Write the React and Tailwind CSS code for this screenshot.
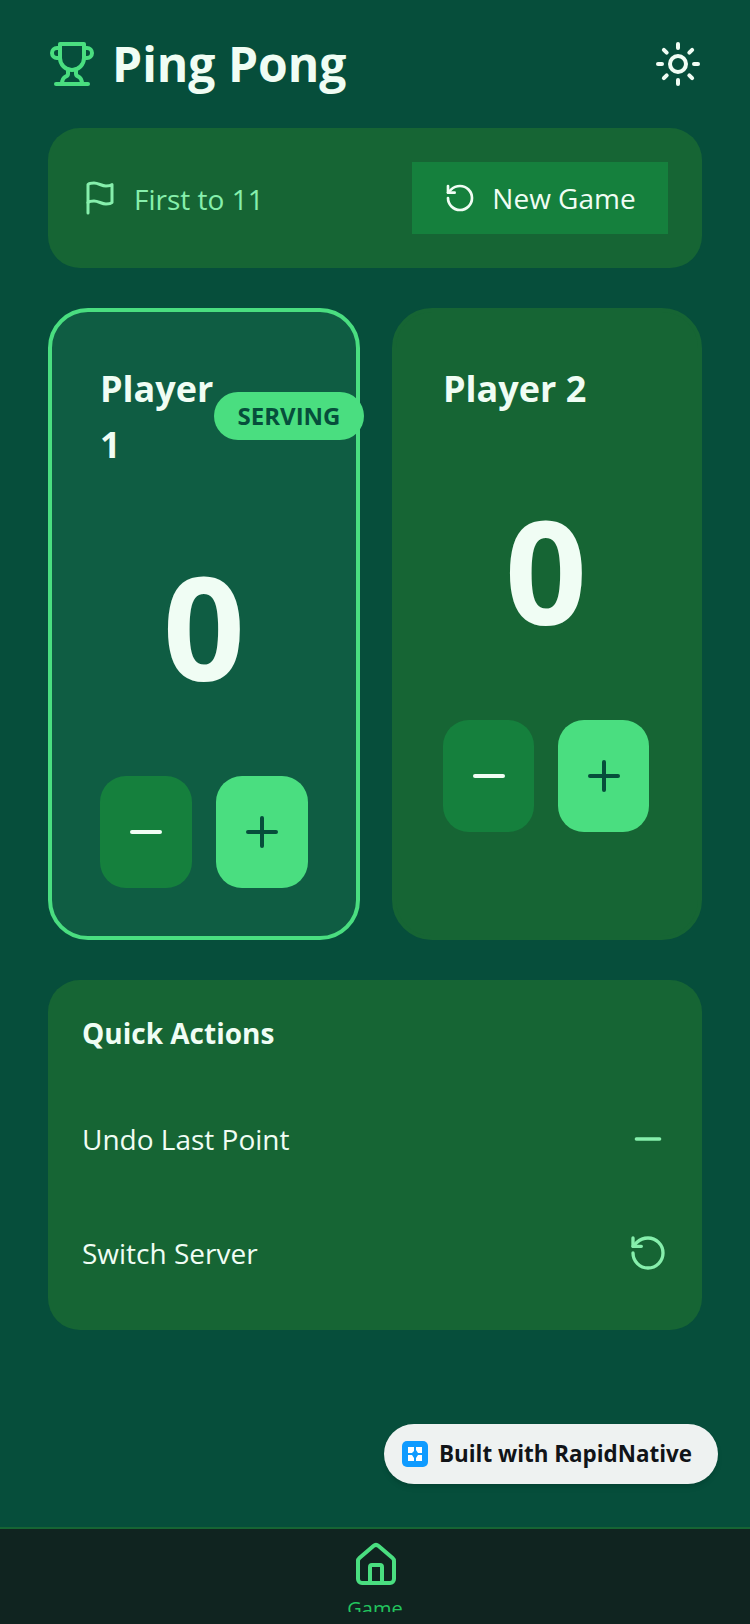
import React from 'react'
import { Sun, RotateCcw, Minus, Plus, House } from 'lucide-react'

const TrophyIcon = () => (
  <svg width="48" height="48" viewBox="0 0 24 24" fill="none" stroke="#4ade80" strokeWidth="2" strokeLinecap="round" strokeLinejoin="round">
    <path d="M6 9H4.5a2.5 2.5 0 0 1 0-5H6" />
    <path d="M18 9h1.5a2.5 2.5 0 0 0 0-5H18" />
    <path d="M4 22h16" />
    <path d="M10 14.66V17c0 .55-.47.98-.97 1.21C7.85 18.75 7 20.24 7 22" />
    <path d="M14 14.66V17c0 .55.47.98.97 1.21C16.15 18.75 17 20.24 17 22" />
    <path d="M18 2H6v7a6 6 0 0 0 12 0V2Z" />
  </svg>
)

const FlagIcon = () => (
  <svg width="36" height="36" viewBox="0 0 24 24" fill="none" stroke="#86efac" strokeWidth="2" strokeLinecap="round" strokeLinejoin="round">
    <path d="M4 15s1-1 4-1 5 2 8 2 4-1 4-1V3s-1 1-4 1-5-2-8-2-4 1-4 1z" />
    <path d="M4 22v-7" />
  </svg>
)

const PlayerCard = ({ name, serving }) => {
  return (
    <div className={serving
      ? 'relative w-[312px] shrink-0 rounded-[40px] p-[48px] bg-[#0f5d43] border-4 border-[#4ade80]'
      : 'relative flex-1 rounded-[40px] py-[48px] pl-[47px] pr-[49px] bg-[#166534] border-4 border-[#166534]'}>
      <div className={serving
        ? 'max-w-[120px] mt-[1px] text-[36px] leading-[56px] font-bold text-[#f0fdf4]'
        : 'mt-[1px] text-[36px] leading-[56px] font-bold text-[#f0fdf4]'}>{name}</div>
      {serving && (
        <div className="absolute top-[80px] right-[-8px] h-[48px] w-[150px] flex items-center justify-center rounded-full bg-[#4ade80] text-[24px] font-bold text-[#064e3b]">
          SERVING
        </div>
      )}
      <div className="mt-[80px] mb-[79px] text-center text-[144px] leading-[144px] font-bold text-[#f0fdf4]">0</div>
      <div className="flex gap-[24px]">
        <button className="flex-1 h-[112px] flex items-center justify-center rounded-[26px] bg-[#15803d] text-[#f0fdf4]">
          <Minus size={48} strokeWidth={2} />
        </button>
        <button className="flex-1 h-[112px] flex items-center justify-center rounded-[26px] bg-[#4ade80] text-[#064e3b]">
          <Plus size={48} strokeWidth={2} />
        </button>
      </div>
    </div>
  )
}

export default function App() {
  return (
    <div className="relative h-[1624px] w-[750px] overflow-hidden bg-[#064e3b] flex flex-col font-['Open_Sans',sans-serif]">
      <div className="flex-1 px-[48px] pt-[32px]">
        <div className="flex items-center justify-between h-[64px]">
          <div className="flex items-center gap-[16px]">
            <TrophyIcon />
            <span className="text-[48px] leading-[64px] font-bold text-[#f0fdf4]">Ping Pong</span>
          </div>
          <Sun size={48} strokeWidth={2} className="text-[#f0fdf4]" />
        </div>

        <div className="mt-[32px] h-[140px] rounded-[32px] bg-[#166534] flex items-center justify-between pl-[34px] pr-[34px]">
          <div className="flex items-center gap-[16px]">
            <FlagIcon />
            <span className="mt-[2px] text-[28px] text-[#86efac]">First to 11</span>
          </div>
          <button className="w-[256px] h-[72px] bg-[#15803d] flex items-center justify-center gap-[16px] text-[28px] text-[#f0fdf4]">
            <RotateCcw size={32} strokeWidth={2} />
            <span className="pb-[1px]">New Game</span>
          </button>
        </div>

        <div className="mt-[40px] flex gap-[32px]">
          <PlayerCard name="Player 1" serving />
          <PlayerCard name="Player 2" />
        </div>

        <div className="mt-[40px] h-[350px] rounded-[32px] bg-[#166534] px-[34px] pt-[31px]">
          <div className="text-[28px] leading-[44px] font-bold text-[#f0fdf4]">Quick Actions</div>
          <div className="mt-[47px] h-[74px] flex items-center justify-between">
            <span className="text-[28px] text-[#f0fdf4]">Undo Last Point</span>
            <Minus size={40} strokeWidth={2} className="text-[#86efac]" />
          </div>
          <div className="mt-[40px] h-[74px] flex items-center justify-between">
            <span className="text-[28px] text-[#f0fdf4]">Switch Server</span>
            <RotateCcw size={40} strokeWidth={2} className="text-[#86efac]" />
          </div>
        </div>
      </div>

      <div className="absolute top-[1424px] right-[32px] h-[60px] w-[334px] rounded-full bg-[#eef2f1] flex items-center pl-[18px] gap-[11px] shadow-md">
        <div className="w-[26px] h-[26px] rounded-[5px] bg-[#0f9bff] flex items-center justify-center">
          <svg width="16" height="16" viewBox="0 0 16 16" fill="white">
            <path d="M1 1h6v4L5 7H1zM9 1h6v6h-4L9 4zM1 9h4l2 3v3H1zM9 12l2-3h4v6H9z" />
          </svg>
        </div>
        <span className="text-[22.4px] font-bold text-[#111418]">Built with RapidNative</span>
      </div>

      <div className="h-[97px] shrink-0 bg-[#102420] border-t-2 border-[#166534] flex flex-col items-center pt-[12px]">
        <House size={48} strokeWidth={2} className="ml-[2px] text-[#4ade80]" />
        <div className="mt-[6px] h-[17px] overflow-hidden">
          <span className="block text-[20px] text-[#22c55e] leading-[28px]">Game</span>
        </div>
      </div>
    </div>
  )
}
